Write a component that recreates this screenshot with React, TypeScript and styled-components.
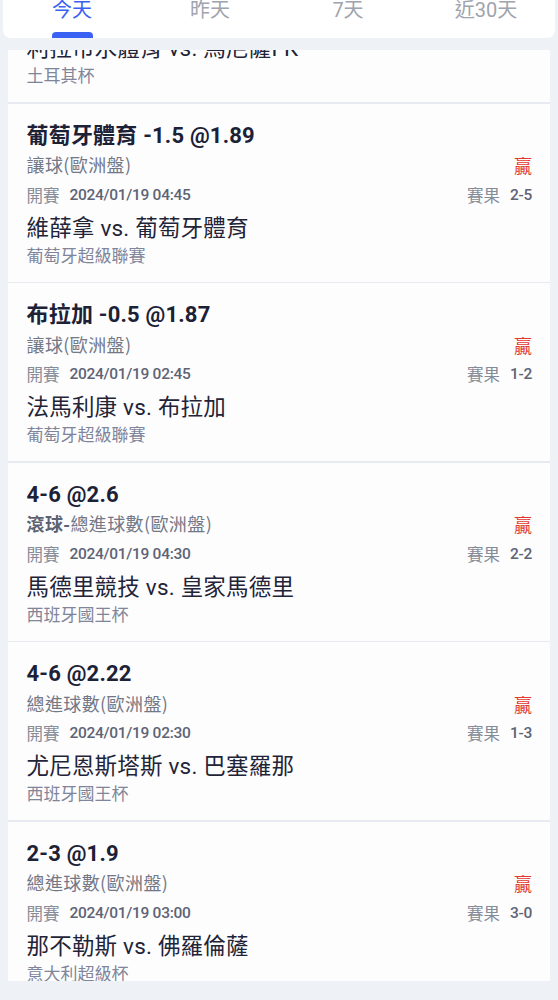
import { useLayoutEffect, useRef } from "react";
import styled, { createGlobalStyle } from "styled-components";

const GlobalStyle = createGlobalStyle`
  html, body {
    margin: 0;
    padding: 0;
    background: #eef1f5;
    font-family: Roboto, "Noto Sans CJK TC", "Noto Sans", sans-serif;
  }
`;

const Page = styled.div`
  height: 1000px;
  display: flex;
  flex-direction: column;
  overflow: hidden;
`;

const TabBar = styled.nav`
  margin: 0 3px;
  height: 38px;
  background: #ffffff;
  border-radius: 0 0 8px 8px;
  display: grid;
  grid-template-columns: repeat(4, 1fr);
`;

const Tab = styled.div<{ $active?: boolean }>`
  display: flex;
  flex-direction: column;
  align-items: center;
  justify-content: space-between;
  font-size: 20px;
  line-height: 21px;
  color: ${(p) => (p.$active ? "#3a62f2" : "#a0a4ad")};
`;

const Indicator = styled.span`
  width: 41px;
  height: 6px;
  border-radius: 4px 4px 0 0;
  background: #3a62f2;
`;

const Viewport = styled.div`
  margin: 12px 8px 0 8px;
  height: 931px;
  overflow: hidden;
`;

const List = styled.div`
  display: flex;
  flex-direction: column;
  gap: 1.5px;
  background: #e7eaf0;
`;

const Card = styled.article`
  background: #fdfdfe;
  padding: 18px 18px 17px 18.5px;
  display: flex;
  flex-direction: column;
`;

const Title = styled.div`
  font-size: 22px;
  line-height: 28px;
  font-weight: 700;
  letter-spacing: 0.2px;
  color: #1c2136;
  white-space: nowrap;
`;

const Row = styled.div<{ $h: number }>`
  display: flex;
  justify-content: space-between;
  align-items: center;
  height: ${(p) => p.$h}px;
`;

const Market = styled.span`
  font-family: "Noto Sans CJK TC", sans-serif;
  font-size: 18px;
  letter-spacing: 0.4px;
  color: #737887;
  margin-top: -2px;

  b {
    font-weight: 700;
    color: #5d6272;
  }
`;

const Win = styled.span`
  font-size: 18px;
  color: #e2392f;
`;

const Meta = styled.span`
  display: flex;
  align-items: center;
  gap: 10px;
  font-size: 16.5px;
  color: #868b98;
`;

const MetaValue = styled.span`
  font-size: 15.5px;
  font-weight: 500;
  letter-spacing: -0.3px;
  color: #5e6475;
`;

const Teams = styled.div`
  font-size: 22.5px;
  line-height: 38px;
  letter-spacing: 0.2px;
  color: #1f2438;
  white-space: nowrap;
`;

const League = styled.div`
  font-size: 17px;
  line-height: 18px;
  color: #80859a;
`;

type Bet = {
  pick: string;
  live?: boolean;
  market: string;
  start: string;
  home: string;
  away: string;
  league: string;
  score: string;
};

const bets: Bet[] = [
  {
    pick: "馬尼薩FK +0.5 @1.92",
    market: "讓球(歐洲盤)",
    start: "2024/01/19 01:00",
    home: "利拉市水體育",
    away: "馬尼薩FK",
    league: "土耳其杯",
    score: "1-2",
  },
  {
    pick: "葡萄牙體育 -1.5 @1.89",
    market: "讓球(歐洲盤)",
    start: "2024/01/19 04:45",
    home: "維薛拿",
    away: "葡萄牙體育",
    league: "葡萄牙超級聯賽",
    score: "2-5",
  },
  {
    pick: "布拉加 -0.5 @1.87",
    market: "讓球(歐洲盤)",
    start: "2024/01/19 02:45",
    home: "法馬利康",
    away: "布拉加",
    league: "葡萄牙超級聯賽",
    score: "1-2",
  },
  {
    pick: "4-6 @2.6",
    live: true,
    market: "總進球數(歐洲盤)",
    start: "2024/01/19 04:30",
    home: "馬德里競技",
    away: "皇家馬德里",
    league: "西班牙國王杯",
    score: "2-2",
  },
  {
    pick: "4-6 @2.22",
    market: "總進球數(歐洲盤)",
    start: "2024/01/19 02:30",
    home: "尤尼恩斯塔斯",
    away: "巴塞羅那",
    league: "西班牙國王杯",
    score: "1-3",
  },
  {
    pick: "2-3 @1.9",
    market: "總進球數(歐洲盤)",
    start: "2024/01/19 03:00",
    home: "那不勒斯",
    away: "佛羅倫薩",
    league: "意大利超級杯",
    score: "3-0",
  },
];

const tabs = ["今天", "昨天", "7天", "近30天"];

export default function App() {
  const viewportRef = useRef<HTMLDivElement>(null);

  // the list is shown scrolled a little past the first record
  useLayoutEffect(() => {
    if (viewportRef.current) viewportRef.current.scrollTop = 126;
  }, []);

  return (
    <Page>
      <GlobalStyle />
      <TabBar>
        {tabs.map((t, i) => (
          <Tab key={t} $active={i === 0}>
            <span>{t}</span>
            {i === 0 && <Indicator />}
          </Tab>
        ))}
      </TabBar>
      <Viewport ref={viewportRef}>
        <List>
          {bets.map((b, i) => (
            <Card key={i}>
              <Title>{b.pick}</Title>
              <Row $h={31}>
                <Market>
                  {b.live && <b>滾球-</b>}
                  {b.market}
                </Market>
                <Win>贏</Win>
              </Row>
              <Row $h={28}>
                <Meta>
                  開賽<MetaValue>{b.start}</MetaValue>
                </Meta>
                <Meta>
                  賽果<MetaValue>{b.score}</MetaValue>
                </Meta>
              </Row>
              <Teams>
                {b.home} vs. {b.away}
              </Teams>
              <League>{b.league}</League>
            </Card>
          ))}
        </List>
      </Viewport>
    </Page>
  );
}
